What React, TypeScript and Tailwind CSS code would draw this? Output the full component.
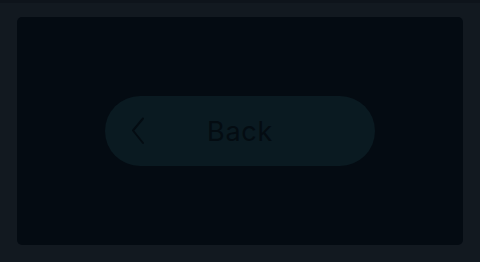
import React from "react";

export default function App() {
  return (
    <div className="w-[480px] h-[262px] bg-[#121920] border-t-[3px] border-[#0e141b] px-[17px] pt-[14px] pb-[17px] flex">
      <div className="flex-1 rounded-[5px] bg-[#040b12] flex items-center justify-center">
        <button className="relative w-[270px] h-[70px] rounded-full bg-[#0a1a21] flex items-center justify-center">
          <svg
            className="absolute left-[23px] top-1/2 -translate-y-1/2"
            width="18"
            height="28"
            viewBox="0 0 18 28"
            fill="none"
          >
            <path d="M15 1.5 L5 13.5 L15 26" stroke="#040c12" strokeWidth="2" strokeLinecap="round" strokeLinejoin="round" />
          </svg>
          <span
            className="text-[27px] leading-none text-[#040c12] tracking-wide"
            style={{ fontFamily: "Inter, 'Noto Sans', sans-serif" }}
          >
            Back
          </span>
        </button>
      </div>
    </div>
  );
}
